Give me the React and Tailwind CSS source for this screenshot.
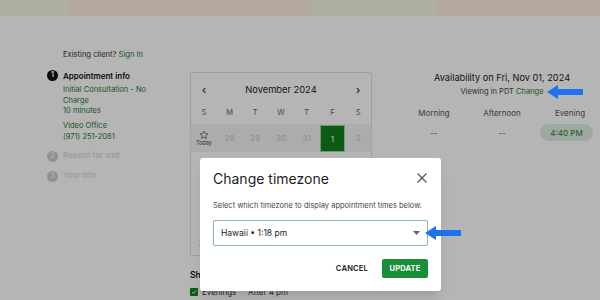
import React from "react";

/* ===============================
   DATA
================================ */

const DAYS = ["S", "M", "T", "W", "T", "F", "S"];

const WEEKS = [
  ["3", "4", "5", "6", "7", "8", "9"],
  ["10", "11", "12", "13", "14", "15", "16"],
  ["17", "18", "19", "20", "21", "22", "23"],
  ["24", "25", "26", "27", "28", "29", "30"],
];

const GREEN = "text-[#2b7a34]";

/* ===============================
   PIECES
================================ */

function Step({ n, active, children }) {
  return (
    <div className="flex items-center gap-[5px] h-[11px]">
      <span
        className={
          active
            ? "w-[11px] h-[11px] rounded-full bg-[#111] text-white text-[7px] font-bold flex items-center justify-center"
            : "w-[11px] h-[11px] rounded-full bg-[#cdcdcd] text-[#ececec] text-[7px] font-bold flex items-center justify-center"
        }
      >
        {n}
      </span>
      <span
        className={
          active
            ? "text-[8px] font-semibold text-[#111]"
            : "text-[7.8px] text-[#d2d2d2]"
        }
      >
        {children}
      </span>
    </div>
  );
}

function Arrow({ className }) {
  return (
    <svg
      className={className}
      viewBox="0 0 36 14"
      width="36"
      height="14"
    >
      <polygon
        points="0,7 11,0 11,4 36,4 36,10 11,10 11,14"
        fill="#1f72ee"
      />
    </svg>
  );
}

/* ===============================
   APP
================================ */

export default function App() {
  return (
    <div className="relative w-[600px] h-[300px] overflow-hidden bg-white font-['Inter',sans-serif]">

      {/* banner */}
      <div className="flex h-4">
        <div className="w-[68px] bg-[#f5fae2]" />
        <div className="w-[245px] bg-[#fdefdf]" />
        <div className="w-[124px] bg-[#f4f9e2]" />
        <div className="flex-1 bg-[#fdefdf]" />
      </div>

      <div className="flex">

        {/* LEFT */}
        <div className="w-[190px] shrink-0 pl-[47px] pt-[34px]">
          <p className="ml-[16px] text-[7.6px] leading-[10px] text-[#333]">
            Existing client? <span className={GREEN}>Sign In</span>
          </p>

          <div className="mt-[10px]">
            <Step n="1" active>Appointment info</Step>
          </div>

          <div className={`ml-[16px] mt-[4px] text-[7.5px] leading-[10.5px] ${GREEN}`}>
            <p>Initial Consultation - No</p>
            <p>Charge</p>
            <p>10 minutes</p>
            <p className="mt-[4.5px]">Video Office</p>
            <p>(971) 251-2081</p>
          </div>

          <div className="mt-[8.5px]">
            <Step n="2">Reason for visit</Step>
          </div>
          <div className="mt-[9px]">
            <Step n="3">Your info</Step>
          </div>
        </div>

        {/* CALENDAR */}
        <div className="w-[182px] shrink-0 pt-[56px]">
          <div className="border border-[#e2e2e2] rounded-[2px] h-[184px] overflow-hidden">
            <div className="h-[34px] flex items-center justify-between">
              <span className="w-[26px] text-center text-[11px] text-[#1f5c27] font-semibold">‹</span>
              <span className="text-[9.3px] text-[#222]">November 2024</span>
              <span className="w-[26px] text-center text-[11px] text-[#1f5c27] font-semibold">›</span>
            </div>

            <div className="grid grid-cols-7 h-[10px] items-center text-center text-[7.5px] text-[#6a6a6a]">
              {DAYS.map((d, i) => (
                <span key={i}>{d}</span>
              ))}
            </div>

            <div className="grid grid-cols-7 mt-[7px] h-[28px] bg-[#f3f3f3] items-center text-center text-[8px] text-[#c6c6c6]">
              <div className="flex flex-col items-center">
                <svg width="10" height="10" viewBox="0 0 24 24" fill="none" stroke="#555" strokeWidth="1.8" strokeLinejoin="round">
                  <polygon points="12,2.5 14.9,8.6 21.5,9.3 16.5,13.8 17.9,20.4 12,17 6.1,20.4 7.5,13.8 2.5,9.3 9.1,8.6" />
                </svg>
                <span className="text-[5.5px] text-[#444] leading-[7px]">Today</span>
              </div>
              <span>28</span>
              <span>29</span>
              <span>30</span>
              <span>31</span>
              <span className="h-[27px] mt-[1px] bg-[#12801c] border border-[#9fd3a5] text-white flex items-center justify-center">1</span>
              <span>2</span>
            </div>

            {WEEKS.map((w, i) => (
              <div key={i} className="grid grid-cols-7 h-[26px] items-center text-center text-[8px] text-[#555]">
                {w.map(d => (
                  <span key={d}>{d}</span>
                ))}
              </div>
            ))}
          </div>

          <p className="mt-[14px] text-[8.5px] font-semibold text-[#111] leading-[10px]">
            Show times for
          </p>
          <div className="mt-[6px] flex items-center gap-[4px] text-[8px] text-[#333]">
            <span className="w-[8px] h-[8px] rounded-[1px] bg-[#12801c] flex items-center justify-center">
              <svg width="6" height="6" viewBox="0 0 12 12" fill="none" stroke="white" strokeWidth="2">
                <polyline points="2,6.5 5,9 10,3" />
              </svg>
            </span>
            <span className="w-[42px]">Evenings</span>
            <span>After 4 pm</span>
          </div>
        </div>

        {/* AVAILABILITY */}
        <div className="ml-[28px] w-[204px] shrink-0 pt-[56px] text-center">
          <p className="text-[9.2px] leading-[12px] text-[#1a1a1a]">
            Availability on Fri, Nov 01, 2024
          </p>
          <p className="mt-[3px] text-[7.5px] leading-[10px] text-[#444]">
            Viewing in PDT <span className={GREEN}>Change</span>
          </p>

          <div className="grid grid-cols-3 mt-[11px] text-[8px] leading-[10px] text-[#555]">
            <span>Morning</span>
            <span>Afternoon</span>
            <span>Evening</span>
          </div>

          <div className="grid grid-cols-3 mt-[6px] items-center text-[8px] text-[#666]">
            <span>--</span>
            <span>--</span>
            <span className="flex">
              <span className={`ml-[4px] w-[53px] h-[17px] rounded-full bg-[#dcefdf] flex items-center justify-center ${GREEN}`}>
                4:40 PM
              </span>
            </span>
          </div>
        </div>

      </div>

      {/* dim */}
      <div className="absolute inset-0 bg-black/[0.29]" />

      {/* MODAL */}
      <div className="absolute left-[200px] top-[158px] w-[241px] h-[133px] bg-white rounded-[3px] shadow-lg px-[13px] pt-[11px]">
        <div className="flex items-center justify-between h-[18px]">
          <h2 className="text-[14px] text-[#1d1d1d]">Change timezone</h2>
          <svg width="10" height="10" viewBox="0 0 10 10" stroke="#555" strokeWidth="1.2" className="mr-[1px]">
            <line x1="0.5" y1="0.5" x2="9.5" y2="9.5" />
            <line x1="9.5" y1="0.5" x2="0.5" y2="9.5" />
          </svg>
        </div>

        <p className="mt-[14px] text-[7.5px] leading-[10px] text-[#444]">
          Select which timezone to display appointment times below.
        </p>

        <div className="mt-[9px] h-[26px] border border-[#8db7a6] rounded-[2px] flex items-center justify-between pl-[7px] pr-[7px]">
          <span className="text-[8.5px] text-[#222]">Hawaii • 1:18 pm</span>
          <svg width="7" height="4" viewBox="0 0 7 4">
            <polygon points="0,0 7,0 3.5,4" fill="#666" />
          </svg>
        </div>

        <div className="mt-[13px] flex items-center justify-end gap-[14px]">
          <span className="text-[7.5px] font-bold text-[#333] tracking-wide">CANCEL</span>
          <span className="w-[46px] h-[19px] rounded-[2px] bg-[#178e38] text-white text-[7.5px] font-bold tracking-wide flex items-center justify-center">
            UPDATE
          </span>
        </div>
      </div>

      {/* annotations */}
      <Arrow className="absolute left-[547px] top-[85px]" />
      <Arrow className="absolute left-[425px] top-[226px]" />
    </div>
  );
}
